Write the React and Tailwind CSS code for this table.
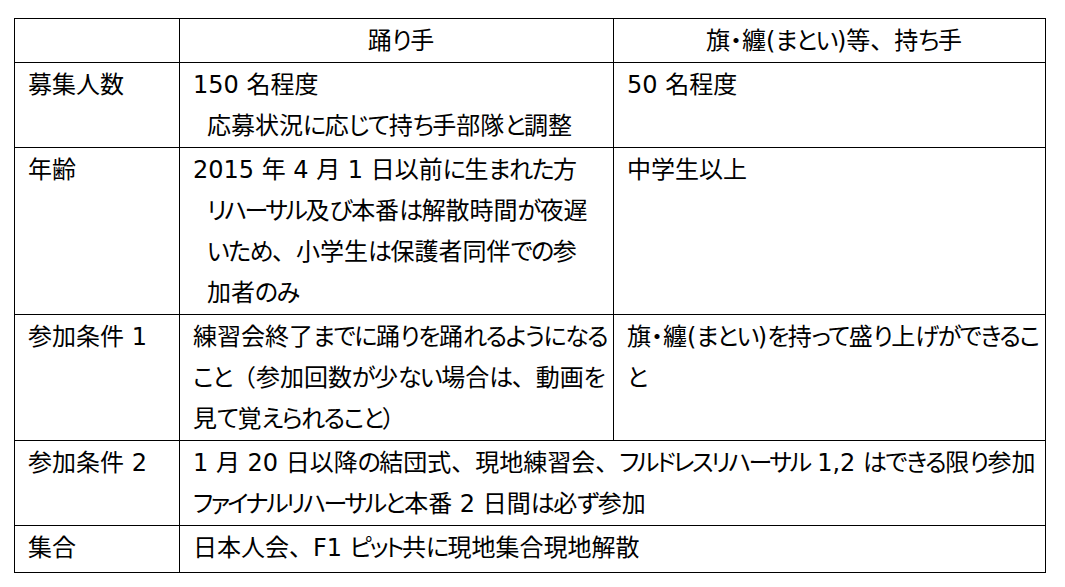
import React from "react";

const font = "font-['DejaVu_Sans','Noto_Sans_CJK_JP',sans-serif] [font-feature-settings:'palt']";
const cell = "border border-black align-top pt-[2px] pl-[13px] pr-[4px] leading-[41px]";

function kind(ch) {
  const c = ch.charCodeAt(0);
  if (c >= 0x3040 && c <= 0x309f) return "h";
  if ((c >= 0x30a0 && c <= 0x30fa) || (c >= 0x30fc && c <= 0x30ff)) return "k";
  if (ch === "、" || ch === "（") return "p";
  return "o";
}

const cls = {
  h: "tracking-[-1.5px]",
  k: "tracking-[-2.5px]",
  p: "[font-feature-settings:normal]",
  o: "",
};

function J({ t }) {
  const runs = [];
  for (const ch of t) {
    const k = kind(ch);
    if (runs.length && runs[runs.length - 1].k === k) runs[runs.length - 1].s += ch;
    else runs.push({ k, s: ch });
  }
  return (
    <>
      {runs.map((r, i) =>
        r.k === "o" ? <React.Fragment key={i}>{r.s}</React.Fragment> : <span key={i} className={cls[r.k]}>{r.s}</span>
      )}
    </>
  );
}

function L({ t, indent }) {
  return (
    <div className={"whitespace-nowrap " + (indent ? "pl-[14px]" : "")}>
      <J t={t} />
    </div>
  );
}

export default function App() {
  return (
    <div className={"bg-white w-[1065px] h-[587px] pt-[18px] pl-[14px] text-black text-[24px] " + font}>
      <table className="table-fixed border-collapse w-[1031px]">
        <colgroup>
          <col className="w-[165px]" />
          <col className="w-[434px]" />
          <col className="w-[432px]" />
        </colgroup>
        <tbody>
          <tr className="h-[42px]">
            <td className={cell}></td>
            <td className={cell + " text-center pl-0 pr-0"}><J t="踊り手" /></td>
            <td className={cell + " text-center pl-0 pr-0"}><J t="旗・纏(まとい)等、持ち手" /></td>
          </tr>
          <tr className="h-[85px]">
            <td className={cell}>募集人数</td>
            <td className={cell}>
              <L t="150 名程度" />
              <L indent t="応募状況に応じて持ち手部隊と調整" />
            </td>
            <td className={cell}><L t="50 名程度" /></td>
          </tr>
          <tr className="h-[167px]">
            <td className={cell}>年齢</td>
            <td className={cell}>
              <L t="2015 年 4 月 1 日以前に生まれた方" />
              <L indent t="リハーサル及び本番は解散時間が夜遅" />
              <L indent t="いため、小学生は保護者同伴での参" />
              <L indent t="加者のみ" />
            </td>
            <td className={cell}><L t="中学生以上" /></td>
          </tr>
          <tr className="h-[126px]">
            <td className={cell}>参加条件 1</td>
            <td className={cell}>
              <L t="練習会終了までに踊りを踊れるようになる" />
              <L t="こと（参加回数が少ない場合は、動画を" />
              <L t="見て覚えられること）" />
            </td>
            <td className={cell}>
              <L t="旗・纏(まとい)を持って盛り上げができるこ" />
              <L t="と" />
            </td>
          </tr>
          <tr className="h-[84px]">
            <td className={cell}>参加条件 2</td>
            <td className={cell} colSpan={2}>
              <L t="1 月 20 日以降の結団式、現地練習会、フルドレスリハーサル 1,2 はできる限り参加" />
              <L t="ファイナルリハーサルと本番 2 日間は必ず参加" />
            </td>
          </tr>
          <tr className="h-[47px]">
            <td className={cell}>集合</td>
            <td className={cell} colSpan={2}>
              <L t="日本人会、F1 ピット共に現地集合現地解散" />
            </td>
          </tr>
        </tbody>
      </table>
    </div>
  );
}
